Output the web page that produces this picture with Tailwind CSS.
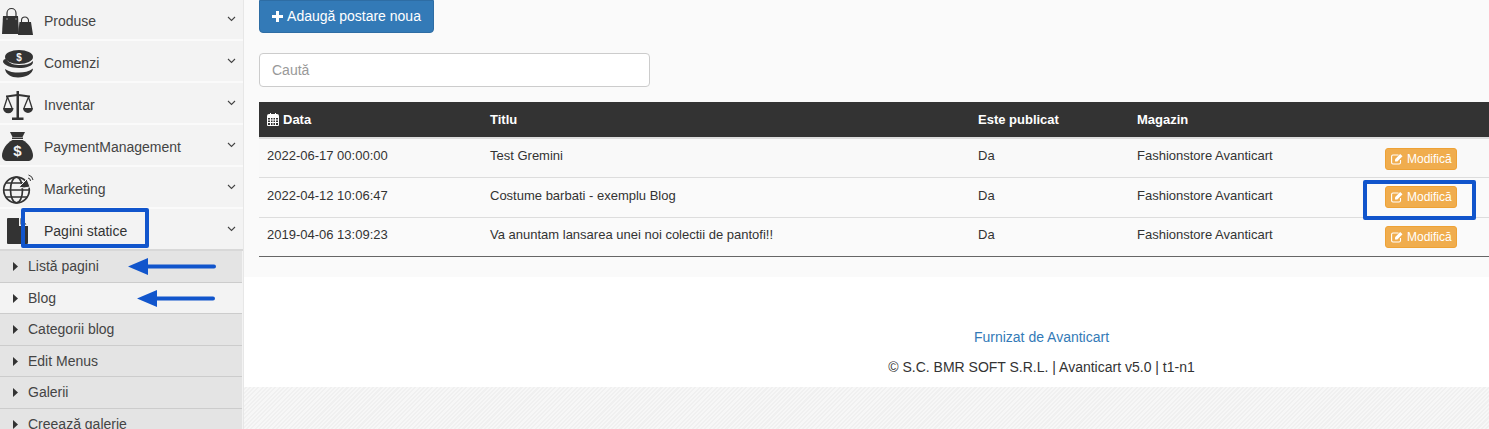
<!DOCTYPE html>
<html>
<head>
<meta charset="utf-8">
<script src="https://cdn.jsdelivr.net/npm/@tailwindcss/browser@4"></script>
</head>
<body class="font-['Liberation_Sans',Arial,sans-serif] text-[#333] text-[14px] overflow-hidden">
<div class="relative flex w-[1489px] h-[429px] overflow-hidden bg-[repeating-linear-gradient(135deg,#f0f0f0_0,#f0f0f0_1.5px,#f7f7f7_1.5px,#f7f7f7_3px)]">
  <aside class="w-[244px] h-[429px] shrink-0 bg-[#f3f3f3] border-r border-[#e7e7e7] overflow-hidden">
    <div class="-mt-[1px]">
    <div class="h-[42px] pt-[4px] flex items-center border-b-2 border-[#fafafa] relative">
      <svg class="absolute left-0 top-[1px] w-[36px] h-[40px]" viewBox="0 0 36 40" fill="#333"><path d="M3 16h15l1 18H2z"/><path d="M7 19v-6a4.500 4.500 0 0 1 9 0v6" fill="none" stroke="#333" stroke-width="1.200"/><path d="M19.500 22h11.500l2 13H18z"/><path d="M21.500 24v-3.500a3.500 3.500 0 0 1 7 0V24" fill="none" stroke="#333" stroke-width="1.100"/><circle cx="7" cy="19" r=".7" fill="#bbb"/><circle cx="16" cy="19" r=".7" fill="#bbb"/></svg>
      <span class="ml-[44px] text-[#444]">Produse</span>
      <svg class="absolute left-[227px] top-[17px] w-[9px] h-[6px]" viewBox="0 0 9 6" fill="none" stroke="#444" stroke-width="1.100"><path d="M1 1l3.500 3.500L8 1"/></svg>
    </div>
    <div class="h-[42px] pt-[4px] flex items-center border-b-2 border-[#fafafa] relative">
      <svg class="absolute left-0 top-[1px] w-[36px] h-[40px]" viewBox="0 0 36 40" fill="#333"><ellipse cx="19" cy="15" rx="14" ry="7"/><path d="M6 17c3 5 9 6 14 6 5 0 10-1 13-4v1c0 4-7 6-14 6-8 0-15-3-16-6 0-2 1-3 3-3z"/><path d="M5 27c4 3 9 3.500 14 3.500 5 0 10-1 14-4 0 5-7 9-15 9-7 0-12-3-13-8.500z"/><text x="19" y="18.500" font-size="10" font-weight="700" fill="#f3f3f3" text-anchor="middle" font-family="Liberation Sans">$</text></svg>
      <span class="ml-[44px] text-[#444]">Comenzi</span>
      <svg class="absolute left-[227px] top-[17px] w-[9px] h-[6px]" viewBox="0 0 9 6" fill="none" stroke="#444" stroke-width="1.100"><path d="M1 1l3.500 3.500L8 1"/></svg>
    </div>
    <div class="h-[42px] pt-[4px] flex items-center border-b-2 border-[#fafafa] relative">
      <svg class="absolute left-0 top-[1px] w-[36px] h-[40px]" viewBox="0 0 36 40" fill="#333"><rect x="16.500" y="7" width="2.500" height="28"/><rect x="12" y="33.500" width="11.500" height="2.500"/><path d="M6 12.500c4 0 8-1.500 12-1.500s8 1.500 12 1.500" fill="none" stroke="#333" stroke-width="1.800"/><path d="M3 24h10.500a5.250 5.250 0 0 1-10.500 0zM23 24h10a5 5 0 0 1-10 0z"/><path d="M7.500 13l-3.500 11M7.500 13l4.500 11M28.500 13l-4.500 11M28.500 13l3.500 11" fill="none" stroke="#333" stroke-width="1.300"/></svg>
      <span class="ml-[44px] text-[#444]">Inventar</span>
      <svg class="absolute left-[227px] top-[17px] w-[9px] h-[6px]" viewBox="0 0 9 6" fill="none" stroke="#444" stroke-width="1.100"><path d="M1 1l3.500 3.500L8 1"/></svg>
    </div>
    <div class="h-[42px] pt-[4px] flex items-center border-b-2 border-[#fafafa] relative">
      <svg class="absolute left-0 top-[1px] w-[36px] h-[40px]" viewBox="0 0 36 40" fill="#333"><path d="M10 6h15l-2.500 5h-10z"/><rect x="12" y="11.500" width="11" height="1.500"/><path d="M12.500 14h10c6 3 10.500 10 10.500 15.500 0 3.500-2 5.500-5.500 5.500h-20C4 35 2 33 2 29.500 2 24 6.500 17 12.500 14z"/><text x="17.500" y="30" font-size="15" font-weight="700" fill="#f3f3f3" text-anchor="middle" font-family="Liberation Sans">$</text></svg>
      <span class="ml-[44px] text-[#444]">PaymentManagement</span>
      <svg class="absolute left-[227px] top-[17px] w-[9px] h-[6px]" viewBox="0 0 9 6" fill="none" stroke="#444" stroke-width="1.100"><path d="M1 1l3.500 3.500L8 1"/></svg>
    </div>
    <div class="h-[42px] pt-[4px] flex items-center border-b-2 border-[#fafafa] relative">
      <svg class="absolute left-0 top-[1px] w-[36px] h-[40px]" viewBox="0 0 36 40" fill="none" stroke="#333" stroke-width="1.700"><circle cx="16.500" cy="22" r="12.800"/><ellipse cx="16.500" cy="22" rx="6" ry="12.800"/><path d="M4 22h25M6 15h21M6 29h21"/><path d="M19 19l8-8 3 8-6 1z" fill="#333" stroke="#f3f3f3" stroke-width="1"/><path d="M28 10a3 3 0 0 1 2.500 3M28.500 7a6 6 0 0 1 4.500 5" stroke-width="1"/></svg>
      <span class="ml-[44px] text-[#444]">Marketing</span>
      <svg class="absolute left-[227px] top-[17px] w-[9px] h-[6px]" viewBox="0 0 9 6" fill="none" stroke="#444" stroke-width="1.100"><path d="M1 1l3.500 3.500L8 1"/></svg>
    </div>
    <div class="h-[42px] pt-[4px] flex items-center border-b-2 border-[#d8d8d8] relative">
      <svg class="absolute left-0 top-[1px] w-[36px] h-[40px]" viewBox="0 0 36 40" fill="#333"><path d="M8 8h11v8h9v17a1 1 0 0 1-1 1H8a1 1 0 0 1-1-1V9a1 1 0 0 1 1-1z"/><path d="M20.500 8l6 6.500h-6z"/></svg>
      <span class="ml-[44px]">Pagini statice</span>
      <svg class="absolute left-[227px] top-[17px] w-[9px] h-[6px]" viewBox="0 0 9 6" fill="none" stroke="#444" stroke-width="1.100"><path d="M1 1l3.500 3.500L8 1"/></svg>
    </div>
    <ul class="w-[242px]">
      <li class="h-[32px] bg-[#e4e4e4] border-b border-[#ccc] flex items-center pl-[13px] text-[#444]"><svg class="w-[5px] h-[9px] mr-[10px]" viewBox="0 0 5 9" fill="#333"><path d="M0 0l5 4.500L0 9z"/></svg>Listă pagini</li>
      <li class="h-[31px] bg-[#f3f3f3] border-b border-[#ccc] flex items-center pl-[13px] text-[#444]"><svg class="w-[5px] h-[9px] mr-[10px]" viewBox="0 0 5 9" fill="#333"><path d="M0 0l5 4.500L0 9z"/></svg>Blog</li>
      <li class="h-[32px] bg-[#e4e4e4] border-b border-[#ccc] flex items-center pl-[13px] text-[#444]"><svg class="w-[5px] h-[9px] mr-[10px]" viewBox="0 0 5 9" fill="#333"><path d="M0 0l5 4.500L0 9z"/></svg>Categorii blog</li>
      <li class="h-[31px] bg-[#e4e4e4] border-b border-[#ccc] flex items-center pl-[13px] text-[#444]"><svg class="w-[5px] h-[9px] mr-[10px]" viewBox="0 0 5 9" fill="#333"><path d="M0 0l5 4.500L0 9z"/></svg>Edit Menus</li>
      <li class="h-[32px] bg-[#e4e4e4] border-b border-[#ccc] flex items-center pl-[13px] text-[#444]"><svg class="w-[5px] h-[9px] mr-[10px]" viewBox="0 0 5 9" fill="#333"><path d="M0 0l5 4.500L0 9z"/></svg>Galerii</li>
      <li class="h-[32px] bg-[#e4e4e4] border-b border-[#ccc] flex items-center pl-[13px] text-[#444]"><svg class="w-[5px] h-[9px] mr-[10px]" viewBox="0 0 5 9" fill="#333"><path d="M0 0l5 4.500L0 9z"/></svg>Creează galerie</li>
    </ul>
    </div>
  </aside>
  <main class="flex-1 min-w-0">
    <div class="h-[277px] bg-[#fafafa] pl-[15px]">
      <button class="block h-[33px] w-[175px] bg-[#337ab7] border border-[#2e6da4] rounded-b-[4px] text-white text-[14px] text-center"><svg class="inline-block w-[11px] h-[11px] mr-[4px] align-[-1px]" viewBox="0 0 11 11" fill="#fff"><path d="M4 0h3v4h4v3H7v4H4V7H0V4h4z"/></svg>Adaugă postare noua</button>
      <input class="block mt-[20px] w-[391px] h-[34px] bg-white border border-[#ccc] rounded-[4px] px-[12px] text-[14px] placeholder:text-[#999]" placeholder="Caută">
      <table class="mt-[15px] w-[1230px] border-collapse text-[13px] table-fixed">
        <thead>
          <tr class="h-[36px] bg-[#333] text-white border-b-2 border-[#ddd] text-left">
            <th class="w-[223px] pl-[8px] font-bold"><svg class="inline-block w-[12px] h-[13px] mr-[4px] align-[-2px]" viewBox="0 0 12 13" fill="#fff"><path fill-rule="evenodd" d="M2 1h1V0h1v1h4V0h1v1h1a2 2 0 0 1 2 2v9a1 1 0 0 1-1 1H1a1 1 0 0 1-1-1V3a2 2 0 0 1 2-2zM1 5v1.500h2V5zm3 0v1.500h1.500V5zm2.500 0v1.500H8V5zM9 5v1.500h2V5zM1 7.500V9h2V7.500zm3 0V9h1.500V7.500zm2.500 0V9H8V7.500zm2.500 0V9h2V7.500zM1 10v2h2v-2zm3 0v2h1.500v-2zm2.500 0v2H8v-2zm2.500 0v2h2v-2z"/></svg>Data</th>
            <th class="w-[488px] pl-[8px] font-bold">Titlu</th>
            <th class="w-[159px] pl-[8px] font-bold">Este publicat</th>
            <th class="w-[248px] pl-[8px] font-bold">Magazin</th>
            <th></th>
          </tr>
        </thead>
        <tbody>
          <tr class="h-[39px] bg-[#f9f9f9] border-b border-[#ddd]">
            <td class="pl-[8px] pb-[5px]">2022-06-17 00:00:00</td><td class="pl-[8px] pb-[5px]">Test Gremini</td><td class="pl-[8px] pb-[5px]">Da</td><td class="pl-[8px] pb-[5px]">Fashionstore Avanticart</td>
            <td class="pl-[8px] pt-[2px]"><a class="flex items-center pl-[5px] w-[72px] h-[22px] bg-[#f0ad4e] border border-[#eea236] rounded-[3px] text-white text-[12px]"><svg class="w-[12px] h-[12px] mr-[4px]" viewBox="0 0 12 12" fill="none" stroke="#fff" stroke-width="1.100"><path d="M9.500 7v2.500A1.500 1.500 0 0 1 8 11H2A1.500 1.500 0 0 1 .6 9.500v-6A1.500 1.500 0 0 1 2 2h5.500"/><path d="M4 6.200L9.200 1l2.300 2.300L6.300 8.500H4z" fill="#fff" stroke="none"/></svg>Modifică</a></td>
          </tr>
          <tr class="h-[40px] border-b border-[#ddd]">
            <td class="pl-[8px] pb-[3px]">2022-04-12 10:06:47</td><td class="pl-[8px] pb-[3px]">Costume barbati - exemplu Blog</td><td class="pl-[8px] pb-[3px]">Da</td><td class="pl-[8px] pb-[3px]">Fashionstore Avanticart</td>
            <td class="pl-[8px]"><a class="flex items-center pl-[5px] w-[72px] h-[22px] bg-[#f0ad4e] border border-[#eea236] rounded-[3px] text-white text-[12px]"><svg class="w-[12px] h-[12px] mr-[4px]" viewBox="0 0 12 12" fill="none" stroke="#fff" stroke-width="1.100"><path d="M9.500 7v2.500A1.500 1.500 0 0 1 8 11H2A1.500 1.500 0 0 1 .6 9.500v-6A1.500 1.500 0 0 1 2 2h5.500"/><path d="M4 6.200L9.200 1l2.300 2.300L6.300 8.500H4z" fill="#fff" stroke="none"/></svg>Modifică</a></td>
          </tr>
          <tr class="h-[39px] border-b border-[#666]">
            <td class="pl-[8px] pb-[3px]">2019-04-06 13:09:23</td><td class="pl-[8px] pb-[3px]">Va anuntam lansarea unei noi colectii de pantofi!!</td><td class="pl-[8px] pb-[3px]">Da</td><td class="pl-[8px] pb-[3px]">Fashionstore Avanticart</td>
            <td class="pl-[8px]"><a class="flex items-center pl-[5px] w-[72px] h-[22px] bg-[#f0ad4e] border border-[#eea236] rounded-[3px] text-white text-[12px]"><svg class="w-[12px] h-[12px] mr-[4px]" viewBox="0 0 12 12" fill="none" stroke="#fff" stroke-width="1.100"><path d="M9.500 7v2.500A1.500 1.500 0 0 1 8 11H2A1.500 1.500 0 0 1 .6 9.500v-6A1.500 1.500 0 0 1 2 2h5.500"/><path d="M4 6.200L9.200 1l2.300 2.300L6.300 8.500H4z" fill="#fff" stroke="none"/></svg>Modifică</a></td>
          </tr>
        </tbody>
      </table>
    </div>
    <footer class="h-[110px] bg-white flex flex-col items-center pt-[50px] pl-[350px]">
      <a class="text-[#337ab7] leading-[20px]">Furnizat de Avanticart</a>
      <p class="mt-[10px] leading-[20px]">© S.C. BMR SOFT S.R.L. | Avanticart v5.0 | t1-n1</p>
    </footer>
  </main>
  <div class="absolute left-[21px] top-[208px] w-[128px] h-[40px] border-[4px] border-[#1155cc] rounded-[2px]"></div>
  <div class="absolute left-[1363px] top-[180px] w-[113px] h-[40px] border-[4px] border-[#1155cc] rounded-[2px]"></div>
  <svg class="absolute left-[128px] top-[258px] w-[88px] h-[17px]" viewBox="0 0 88 17" fill="#1155cc"><path d="M0 8.500L20 0v6.500h66a2 2 0 0 1 0 4H20V17z"/></svg>
  <svg class="absolute left-[137px] top-[290px] w-[78px] h-[17px]" viewBox="0 0 78 17" fill="#1155cc"><path d="M0 8.500L20 0v6.500h56a2 2 0 0 1 0 4H20V17z"/></svg>
</div>
</body>
</html>
